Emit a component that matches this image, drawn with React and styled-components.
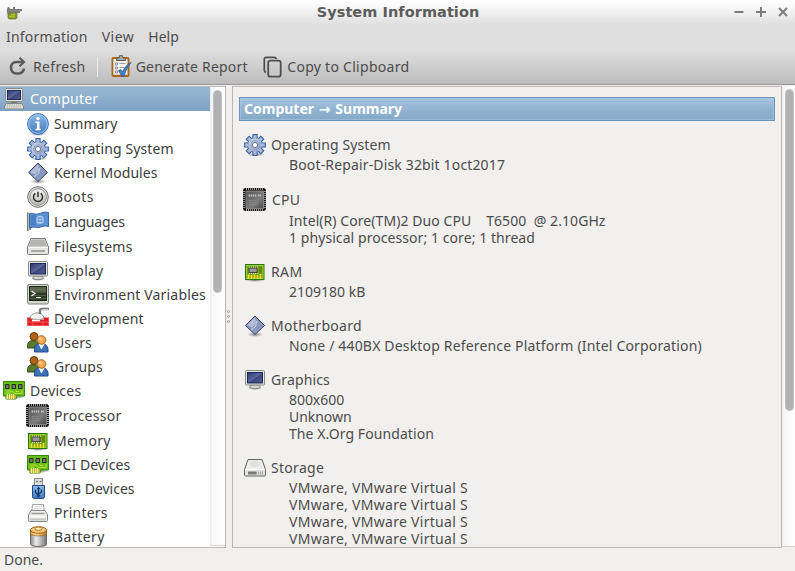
import React from 'react';
import styled, { createGlobalStyle } from 'styled-components';

const GlobalStyle = createGlobalStyle`
  * { box-sizing: border-box; }
  body { margin: 0; background: #f1f0ee; overflow: hidden; }
`;

const Window = styled.div`
  width: 795px;
  height: 571px;
  display: flex;
  flex-direction: column;
  overflow: hidden;
  background: #f1f0ee;
  color: #4c4c4c;
  font-family: 'Noto Sans', 'Open Sans', sans-serif;
  font-size: 14px;
  white-space: pre;
`;

const Header = styled.header`
  height: 85px;
  flex: none;
  background: linear-gradient(#fff 0, #fafafa 5px, #dfdfdf 25px, #dedede 50px, #bdbdbd 83px);
  border-bottom: 1px solid #979596;
`;

const TitleBar = styled.div`
  height: 25px;
  display: grid;
  grid-template-columns: 120px 1fr 120px;
  align-items: center;
  padding-left: 7px;
`;

const WindowTitle = styled.h1`
  margin: 0;
  padding: 0 6px 2px 0;
  text-align: center;
  font: bold 14.5px/24px 'DejaVu Sans', sans-serif;
  letter-spacing: 0.05px;
  color: #5c5c5c;
`;

const WindowButtons = styled.div`
  display: flex;
  justify-content: flex-end;
  gap: 8px;
  padding: 0 5px 2px 0;
`;

const MenuBar = styled.nav`
  height: 24px;
  display: flex;
  gap: 14px;
  padding-left: 6px;
`;

const ToolBar = styled.div`
  height: 35px;
  display: flex;
  align-items: center;
`;

const ToolButton = styled.div`
  display: flex;
  align-items: center;
  gap: ${(p) => p.$gap}px;
  margin-left: ${(p) => p.$ml}px;
`;

const ToolDivider = styled.div`
  width: 1px;
  height: 20px;
  margin-left: 11px;
  background: #efefef;
`;

const Text = styled.span`
  line-height: 24px;
  letter-spacing: ${(p) => p.$ls || 0}px;
`;

const Body = styled.div`
  flex: none;
  display: flex;
  height: 463px;
  padding-top: 1px;
`;

const Sidebar = styled.aside`
  width: 226px;
  display: flex;
  border: solid #b9b6b3;
  border-width: 1px 1px 1px 0;
  background: #fff;
  overflow: hidden;
`;

const Tree = styled.div`
  width: 210px;
  color: #3c3c3c;
`;

const TreeRow = styled.div`
  height: ${(p) => p.$h}px;
  display: flex;
  align-items: flex-start;
  gap: 4px;
  padding-left: ${(p) => (p.$parent ? 2 : 26)}px;
  background: ${(p) => (p.$selected ? 'linear-gradient(#97b8d3, #7fa3c5 24px, #fff 24px)' : 'none')};
  color: ${(p) => (p.$selected ? '#fff' : 'inherit')};
`;

const ScrollTrack = styled.div`
  width: ${(p) => p.$w}px;
  height: ${(p) => p.$h}px;
  padding: ${(p) => p.$pad};
  background: linear-gradient(90deg, #ececec 0, #f6f6f6 2px, #fff 100%);
  border-bottom: 1px solid #d5d3d1;
`;

const ScrollThumb = styled.div`
  width: 9px;
  height: ${(p) => p.$h}px;
  border-radius: 5px;
  background: #b1b1b1;
  border: 1px solid #c2c2c2;
`;

const Splitter = styled.div`
  width: 6px;
  display: flex;
  flex-direction: column;
  align-items: center;
  justify-content: center;
  gap: 2px;
  padding: 0 1px 2px 0;
`;

const Grip = styled.i`
  width: 3px;
  height: 3px;
  border: 1px solid #999;
  border-radius: 1.5px;
`;

const Content = styled.main`
  width: 550px;
  padding: 10px 6px 0;
  border: 1px solid #b9b6b3;
  overflow: hidden;
`;

const Heading = styled.h2`
  margin: 0 0 12px;
  height: 24px;
  padding-left: 4px;
  font-size: 14px;
  line-height: 22px;
  color: #fff;
  border: 1px solid #6b94b8;
  background: linear-gradient(#a6c4de, #94b5d1 45%, #84a8c8);
  box-shadow: inset 0 0 0 1px #aac8e099;
`;

const Arrow = styled.span`
  display: inline-block;
  width: 14px;
  line-height: 20px;
  text-align: center;
  font-family: 'DejaVu Sans', sans-serif;
`;

const Section = styled.section`
  padding: 0 4px 14px;
`;

const SectionTitle = styled.div`
  height: ${(p) => p.$h}px;
  display: flex;
  gap: ${(p) => p.$gap}px;
`;

const Line = styled.div`
  height: 17px;
  line-height: 17px;
  padding-left: 46px;
  letter-spacing: ${(p) => p.$ls}px;
`;

const StatusBar = styled.footer`
  padding-left: 4px;
`;

const Svg = styled.svg`
  flex: none;
  display: block;
`;

const Defs = () => (
  <Svg width="0" height="0">
    <defs>
      <linearGradient id="blue" x2="0" y2="1"><stop stopColor="#8db9e8" /><stop offset="1" stopColor="#3f78bd" /></linearGradient>
      <linearGradient id="steel" x2="1" y2="1"><stop stopColor="#dde3f2" /><stop offset="1" stopColor="#8794ba" /></linearGradient>
      <linearGradient id="grey" x2="0" y2="1"><stop stopColor="#f4f4f2" /><stop offset="1" stopColor="#b9bab6" /></linearGradient>
      <linearGradient id="metal" x2="1"><stop stopColor="#8b8b8b" /><stop offset=".35" stopColor="#eee" /><stop offset="1" stopColor="#777" /></linearGradient>
      <linearGradient id="copper" x2="1"><stop stopColor="#d99736" /><stop offset=".35" stopColor="#ffe09a" /><stop offset="1" stopColor="#bf741a" /></linearGradient>
      <linearGradient id="screen" x2="1" y2="1"><stop stopColor="#2b356d" /><stop offset=".5" stopColor="#5b689c" /><stop offset=".55" stopColor="#3b467d" /><stop offset="1" stopColor="#555f97" /></linearGradient>
      <linearGradient id="chip" x2="1" y2="1"><stop stopColor="#555" /><stop offset=".6" stopColor="#7c7c7c" /><stop offset="1" stopColor="#484848" /></linearGradient>
      <radialGradient id="shade"><stop stopColor="#000" stopOpacity=".45" /><stop offset="1" stopColor="#000" stopOpacity="0" /></radialGradient>
    </defs>
  </Svg>
);

const teeth = [0, 45, 90, 135, 180, 225, 270, 315];

const art = {
  computer: (
    <>
      <rect x="3.5" y="1.5" width="17" height="13" rx="1" fill="#e6e6e0" stroke="#8a8b86" />
      <rect x="5.5" y="3.5" width="13" height="9" fill="url(#screen)" stroke="#202a5c" />
      <path d="M9 15h6v2H9z" fill="#777" />
      <path d="M4 16.500h16l1.500 3.500v2h-19v-2z" fill="#e4e4de" stroke="#858680" />
      <path d="M5 18h14M4.500 20h15" stroke="#a5a59e" strokeDasharray="1.500 .7" />
    </>
  ),
  info: (
    <>
      <ellipse cx="12" cy="22" rx="9" ry="2" fill="url(#shade)" />
      <circle cx="12" cy="12" r="10.400" fill="url(#blue)" stroke="#3c70b0" />
      <circle cx="12" cy="12" r="9.300" fill="none" stroke="#a6cbf0" strokeWidth=".9" />
      <circle cx="12" cy="6.500" r="1.700" fill="#fff" />
      <path d="M9.500 9.500h4v7.300h1.500v1.400h-5.500v-1.400H11V11H9.500z" fill="#fff" />
    </>
  ),
  gear: (
    <>
      <ellipse cx="13" cy="21.500" rx="9" ry="2" fill="url(#shade)" />
      {teeth.map((a) => (
        <path key={a} d="M10 5.500V1.700h4V5.500" transform={`rotate(${a} 12 12)`} fill="#a9b8dc" stroke="#37619d" strokeWidth="1.200" />
      ))}
      <circle cx="12" cy="12" r="7.400" fill="url(#steel)" stroke="#446ca6" />
      {teeth.map((a) => (
        <path key={a} d="M10.600 2.500h2.800v4h-2.800z" transform={`rotate(${a} 12 12)`} fill="#a9b8dc" />
      ))}
      <circle cx="12" cy="12" r="4.200" fill="none" stroke="#8a98c2" />
      <circle cx="12" cy="12" r="2.600" fill="#fff" stroke="#69789c" />
    </>
  ),
  diamond: (
    <>
      <ellipse cx="12" cy="20.500" rx="8" ry="2.500" fill="url(#shade)" />
      <path d="M12 2 21.500 11.500 12 20.500 2.500 11.500z" fill="#8998bd" stroke="#3a4469" />
      <path d="M12 3.300 4.200 11.300l5 2.200L13 9z" fill="#b3bed9" />
      <path d="m14 7-1.500 5.500L8 16" fill="none" stroke="#dbe1f1" strokeWidth=".9" />
    </>
  ),
  power: (
    <>
      <circle cx="12" cy="12" r="10.300" fill="#e2e2e0" stroke="#6e6e6c" />
      <circle cx="12" cy="12" r="8.300" fill="url(#grey)" stroke="#8e8e8c" />
      <path d="M9.300 8.400a4.500 4.500 0 1 0 5.400 0M12 6.700v5.300" fill="none" stroke="#2e3234" strokeWidth="1.500" />
    </>
  ),
  flag: (
    <>
      <path d="M1.700 2.500v18.500M4 3v17" stroke="#6f7678" strokeWidth="1.500" />
      <path d="M3.500 4c3-2 5 1 8.500 0s6-2.500 10.500-1.500v14c-4-1.500-7 .5-10 1s-5-1.500-9 .5z" fill="#5b91d1" stroke="#3365a3" />
      <path d="M5 5c2-1 3 0 5 .5v10c-2-.5-3-1-5 0z" fill="#3a70b5" opacity=".5" />
      <circle cx="14" cy="9.500" r="3.200" fill="none" stroke="#b1d0f1" strokeWidth="1.200" />
      <path d="M10.800 9.500h6.400M14 6.300v6.400M10 12c1 2 6.500 2 8 0" stroke="#b1d0f1" strokeWidth=".8" fill="none" />
    </>
  ),
  drive: (
    <>
      <path d="M5 3.500h14l3.500 8.500v6.500a1 1 0 0 1-1 1h-19a1 1 0 0 1-1-1V12z" fill="#e5e5e3" stroke="#777875" />
      <path d="M5.500 4.500h13l2.700 7H2.800z" fill="#b5b6b3" />
      <path d="M2 12.500h20" stroke="#fafafa" />
      <path d="M5 16h14" stroke="#929390" strokeWidth="1.500" />
    </>
  ),
  storage: (
    <>
      <path d="M5 3.500h14l3.500 10v5.500a1 1 0 0 1-1 1h-19a1 1 0 0 1-1-1v-5.500z" fill="#e3e3e1" stroke="#61625f" />
      <path d="M5.600 4.500h12.800l2.800 9H2.800z" fill="#ececea" />
      <path d="M2 13.500h20" stroke="#fff" />
      <path d="M5 17h8" stroke="#777" strokeWidth="3" />
      <path d="M13 17h8" stroke="#999" strokeWidth="3" strokeDasharray="1 1" />
      <ellipse cx="12" cy="8" rx="5.500" ry="3" fill="#e0e0de" />
    </>
  ),
  display: (
    <>
      <ellipse cx="12" cy="20.500" rx="7" ry="1.500" fill="url(#shade)" />
      <path d="M8 17h8l1.500 2.500c-2 1.500-9 1.500-11 0z" fill="#d6d6d2" stroke="#888983" />
      <rect x="2.500" y="2.500" width="19" height="14.500" rx="1" fill="#e8e8e4" stroke="#888983" />
      <rect x="4.500" y="4.500" width="15" height="10.500" fill="url(#screen)" stroke="#1e2658" />
    </>
  ),
  terminal: (
    <>
      <rect x="1.500" y="1.500" width="21" height="19.500" rx="1.500" fill="#d3d5cf" stroke="#80827c" />
      <rect x="3.500" y="3.500" width="17" height="14" fill="#2e3b25" stroke="#20271b" />
      <path d="M4 4h16v5.500H4z" fill="#6f7c5e" opacity=".65" />
      <path d="M4 6.500h16M4 12.500h16M4 15.500h16" stroke="#718062" opacity=".45" />
      <path d="m5.500 8 3.500 2.500L5.500 13M10 14.500h5" fill="none" stroke="#fff" strokeWidth="1.200" />
    </>
  ),
  dev: (
    <>
      <path d="M1 10.500h5v2h12v-2h5V19H1z" fill="#e01b24" />
      <path d="M1.500 11v7.500h21V11M1 15h22M7 15v4M12 13v2M17 15v4" stroke="#ff6f69" strokeWidth=".7" fill="none" />
      <path d="M4 11c1-4 5-5.500 8-5 3 .3 5.500 2 6 5-2 2-11 2-14 0z" fill="#f0f0ee" stroke="#90908c" />
      <path d="M14 7V3.500c0-1 1-1.500 2-1.500h7" fill="none" stroke="#777" strokeWidth="2.400" />
      <path d="M15 4c.3-1 1-1.300 2-1.300h5.500" fill="none" stroke="#e6e6e4" />
      <path d="M6 13.500h8" stroke="#fff" strokeWidth="1.500" />
    </>
  ),
  users: (
    <>
      <path d="M1.500 17c-.5-5 1.500-7.500 6-7.500s6 2 6 7.500z" fill="#5a7a30" stroke="#344a1a" />
      <circle cx="8" cy="5.500" r="4" fill="#ad6418" stroke="#6b3b0c" />
      <path d="M8.500 21c-.8-6 1.500-8.500 6.500-8.500s7.500 2.500 7 8.500z" fill="#3c73b8" stroke="#204c87" />
      <path d="m12.500 13 3 5.500 3-5.500z" fill="#fff" />
      <circle cx="15.500" cy="9" r="4.300" fill="#f4a64c" stroke="#b5661b" />
      <circle cx="14.500" cy="8" r="1.800" fill="#ffcc8c" />
    </>
  ),
  card: (
    <>
      <ellipse cx="14" cy="18" rx="10" ry="2" fill="url(#shade)" />
      <path d="M1.500 2.500h21v14.500h-8l-.5 3H4v-3H1.500z" fill="#66bd1e" stroke="#36890b" />
      <path d="M4 16h10v4H4z" fill="#c3b42c" />
      <path d="M5.500 15v5M7.500 15v5M9.500 15v5M11.500 15v5" stroke="#f7f09b" />
      <path d="M3.500 5.500h3.500v4H3.500zM10 5.500h3.500v4H10zM16.500 5.500H20v4h-3.500z" fill="#777" stroke="#242e1c" />
      <path d="M4 12h6l3 2.500h7V11M3.500 14h5M14 11v1.500h3" fill="none" stroke="#c0dc31" />
    </>
  ),
  chip: (
    <>
      <rect x="1.500" y="1.500" width="20" height="20" rx="1.500" fill="none" stroke="#111" strokeWidth="3" />
      <path d="M3 1h18M3 22h18M1 3v18M22 3v18" stroke="#c9c9c9" strokeWidth="1.500" strokeDasharray="1 1" />
      <rect x="3" y="3" width="17.500" height="17.500" fill="url(#chip)" stroke="#999" strokeWidth=".8" />
      <path d="M5.500 7.500h8M15 7.500h3" stroke="#c2c2c2" strokeWidth="2" strokeDasharray="1.500 .6" />
      <path d="M6 12.500h7M6 14.500h9M6 16.500h8" stroke="#858585" strokeDasharray="2 .5" />
    </>
  ),
  ram: (
    <>
      <ellipse cx="12" cy="20.500" rx="10" ry="1.500" fill="url(#shade)" />
      <rect x="2.500" y="4.500" width="18.500" height="15" fill="#79a413" stroke="#2b7607" />
      <rect x="3.500" y="5.500" width="16.500" height="13" fill="none" stroke="#94cc2b" />
      <path d="M5.500 14.500v4.500M8.500 15v4M11.500 14.500v4.500M14.500 15v4M17.500 14v5" stroke="#ffe12c" strokeWidth="1.600" />
      <rect x="6" y="8" width="8" height="4.500" fill="#999" stroke="#444" />
      <path d="M6 7h9M6 13.500h9" stroke="#ddd" strokeDasharray="1 1" />
      <path d="M16 8h3M16 10h2.500M16 12h3" stroke="#4d6e08" />
    </>
  ),
  usb: (
    <>
      <rect x="8.500" y="1.500" width="8" height="7" fill="#e1e1df" stroke="#8a8a88" />
      <path d="M10 4.500h2M13.500 4.500h2" stroke="#777" strokeWidth="1.500" />
      <path d="M6.500 8.500h12v11a2 2 0 0 1-2 2h-8a2 2 0 0 1-2-2z" fill="url(#blue)" stroke="#204a87" />
      <path d="M12.500 19.500v-8M12.500 18l-3-2.500V13M12.500 17l3-2v-2.500" fill="none" stroke="#17355f" strokeWidth="1.200" />
      <circle cx="12.500" cy="19" r="1.300" fill="#17355f" />
      <path d="m12.500 9.500-1.800 2.800h3.600z" fill="#17355f" />
    </>
  ),
  printer: (
    <>
      <path d="M6.500 3.500h11l.8 7H5.700z" fill="#fafafa" stroke="#a2a29f" />
      <path d="M8 5.500h8M8 7.500h8" stroke="#dcdcdc" />
      <path d="M5 9.500h14l2.500 4.500v5.500a1 1 0 0 1-1 1h-17a1 1 0 0 1-1-1V14z" fill="#eeeeec" stroke="#858683" />
      <path d="M5.500 12.500h13" stroke="#999" strokeWidth="1.500" />
      <path d="M3 15.500h18" stroke="#fff" />
      <path d="M4 18.500h16" stroke="#c5c5c3" strokeWidth="2" />
    </>
  ),
  battery: (
    <>
      <ellipse cx="13" cy="20.500" rx="10" ry="2" fill="url(#shade)" />
      <path d="M4.500 5.500v14c1 2.500 15 2.500 16 0v-14z" fill="url(#metal)" stroke="#666" />
      <path d="M4.500 5v4c1 2.500 15 2.500 16 0V5z" fill="url(#copper)" stroke="#95611b" strokeWidth=".7" />
      <ellipse cx="12.500" cy="5" rx="8" ry="3.300" fill="#f4c573" stroke="#9d6519" />
      <ellipse cx="12.500" cy="3.700" rx="3.500" ry="1.700" fill="#ffe9bc" stroke="#b27925" />
    </>
  ),
};

const Icon = ({ name }) => <Svg width="24" height="24" viewBox="0 0 24 24">{art[name]}</Svg>;

const AppIcon = () => (
  <Svg width="16" height="15" viewBox="0 0 16 15">
    <path d="M0 6V3L1 1h1l1 2h3V1h2v2h7v2h-2v2h-3v2H1z" fill="#777" />
    <path d="M1 7h9v4.500L9 13H2l-1-1z" fill="#7f9a28" stroke="#6b7648" strokeWidth=".8" />
    <path d="M2 10.500h6M4 8.500h4" stroke="#a9c52d" strokeWidth="1.500" />
    <path d="M1 5h13" stroke="#a08a8a" />
  </Svg>
);

const RefreshIcon = () => (
  <Svg width="17" height="19" viewBox="0 0 17 19">
    <path d="M14 5H7.500C4 5 2 7.500 2 10.500c0 3.500 2 6 5.500 6H9c3 0 5.500-1.500 6-5" fill="none" stroke="#5a5a5a" strokeWidth="2.600" />
    <path d="M10.500 0.800 15 5l-4.500 4.200" fill="none" stroke="#5a5a5a" strokeWidth="2.200" />
  </Svg>
);

const ReportIcon = () => (
  <Svg width="21" height="23" viewBox="0 0 21 23">
    <rect x="1.500" y="3" width="16" height="18" rx="1" fill="#f4f4f2" stroke="#a9671a" strokeWidth="2" />
    <path d="M3 4.500v15h13" fill="none" stroke="#d7d7d5" />
    <path d="M5.500 5.500v-2L8 3l.5-2.300h3L12 3l2.500.5v2z" fill="#aaa" stroke="#5d5d5b" />
    <path d="M4.500 8h2v2h-2zM4.500 12h2v2h-2zM4.500 16h2v2h-2z" fill="#fff" stroke="#777" strokeWidth=".8" />
    <path d="M8.500 8.500h6M8.500 12.500h5M8.500 16.500h3" stroke="#999" />
    <path d="m7.500 15.500 2-1 2 2.500c2-4.500 4.500-7.500 8.500-9.500-3 3.500-5.500 8-7 14h-2z" fill="#4b7fc1" stroke="#2b5794" strokeWidth=".8" />
  </Svg>
);

const CopyIcon = () => (
  <Svg width="19" height="22" viewBox="0 0 19 22">
    <path d="M3 16.500c-1-.3-1.700-1-1.700-2V3.500c0-1.300 1-2.200 2.200-2.200h7.500c1.500 0 2.200.8 2.500 1.700" fill="none" stroke="#4e4e4e" strokeWidth="1.700" />
    <rect x="5.200" y="4.700" width="12.500" height="16" rx="2.200" fill="none" stroke="#4e4e4e" strokeWidth="1.800" />
  </Svg>
);

const Control = ({ d }) => (
  <Svg width="14" height="14" viewBox="0 0 14 14">
    <path d={d} fill="none" stroke="#7c7c7c" strokeWidth="2" />
  </Svg>
);

const tree = [
  ['computer', 'Computer', 25, 0.25, true],
  ['info', 'Summary', 25, 0],
  ['gear', 'Operating System', 24, 0.11],
  ['diamond', 'Kernel Modules', 24, 0.05],
  ['power', 'Boots', 25, 0.4],
  ['flag', 'Languages', 25, -0.15],
  ['drive', 'Filesystems', 24, 0.27],
  ['display', 'Display', 24, 0.25],
  ['terminal', 'Environment Variables', 24, 0.18],
  ['dev', 'Development', 24, 0.13],
  ['users', 'Users', 24, 0.1],
  ['users', 'Groups', 24, 0.1],
  ['card', 'Devices', 25, 0.2, true],
  ['chip', 'Processor', 25, 0.33],
  ['ram', 'Memory', 24, 0.25],
  ['card', 'PCI Devices', 24, 0.05],
  ['usb', 'USB Devices', 24, 0],
  ['printer', 'Printers', 24, 0.22],
  ['battery', 'Battery', 22, 0.4],
];

const vm = ['VMware, VMware Virtual S', 0.29];
const sections = [
  ['gear', 'Operating System', 23, 0.11, 4, [['Boot-Repair-Disk 32bit 1oct2017', 0.15]]],
  ['chip', 'CPU', 24, 0.2, 5, [['Intel(R) Core(TM)2 Duo CPU    T6500  @ 2.10GHz', 0.07], ['1 physical processor; 1 core; 1 thread', 0.07]]],
  ['ram', 'RAM', 23, 0.4, 4, [['2109180 kB', 0]]],
  ['diamond', 'Motherboard', 23, 0.31, 4, [['None / 440BX Desktop Reference Platform (Intel Corporation)', 0.17]]],
  ['display', 'Graphics', 23, 0.14, 4, [['800x600', -0.05], ['Unknown', -0.05], ['The X.Org Foundation', 0.08]]],
  ['storage', 'Storage', 23, 0.3, 4, [vm, vm, vm, vm]],
];

export default function App() {
  return (
    <Window>
      <GlobalStyle />
      <Defs />
      <Header>
        <TitleBar>
          <AppIcon />
          <WindowTitle>System Information</WindowTitle>
          <WindowButtons>
            <Control d="M2.500 7h9" />
            <Control d="M7 2v10M2 7h10" />
            <Control d="m3 3 8 8M11 3l-8 8" />
          </WindowButtons>
        </TitleBar>
        <MenuBar>
          <Text $ls={0.22}>Information</Text>
          <Text $ls={0.5}>View</Text>
          <Text>Help</Text>
        </MenuBar>
        <ToolBar>
          <ToolButton $ml={9} $gap={7}><RefreshIcon /><Text $ls={0.35}>Refresh</Text></ToolButton>
          <ToolDivider />
          <ToolButton $ml={13} $gap={4}><ReportIcon /><Text $ls={0.2}>Generate Report</Text></ToolButton>
          <ToolButton $ml={15.5} $gap={5}><CopyIcon /><Text $ls={0.28}>Copy to Clipboard</Text></ToolButton>
        </ToolBar>
      </Header>
      <Body>
        <Sidebar>
          <Tree>
            {tree.map(([icon, label, h, ls, parent], i) => (
              <TreeRow key={label} $h={h} $parent={parent} $selected={i === 0}>
                <Icon name={icon} />
                <Text $ls={ls}>{label}</Text>
              </TreeRow>
            ))}
          </Tree>
          <ScrollTrack $w={15} $h={459} $pad="3px 0 0 3px"><ScrollThumb $h={203} /></ScrollTrack>
        </Sidebar>
        <Splitter><Grip /><Grip /><Grip /></Splitter>
        <Content>
          <Heading>Computer <Arrow>→</Arrow> Summary</Heading>
          {sections.map(([icon, label, h, ls, gap, lines], n) => (
            <Section key={label} $last={n}>
              <SectionTitle $h={h} $gap={gap}>
                <Icon name={icon} />
                <Text $ls={ls}>{label}</Text>
              </SectionTitle>
              {lines.map(([text, spacing], i) => <Line key={i} $ls={spacing}>{text}</Line>)}
              {n === 0 && <SectionTitle $h={1} />}
            </Section>
          ))}
        </Content>
        <ScrollTrack $w={13} $h={461} $pad="3px 0 0 3px"><ScrollThumb $h={322} /></ScrollTrack>
      </Body>
      <StatusBar><Text>Done.</Text></StatusBar>
    </Window>
  );
}
